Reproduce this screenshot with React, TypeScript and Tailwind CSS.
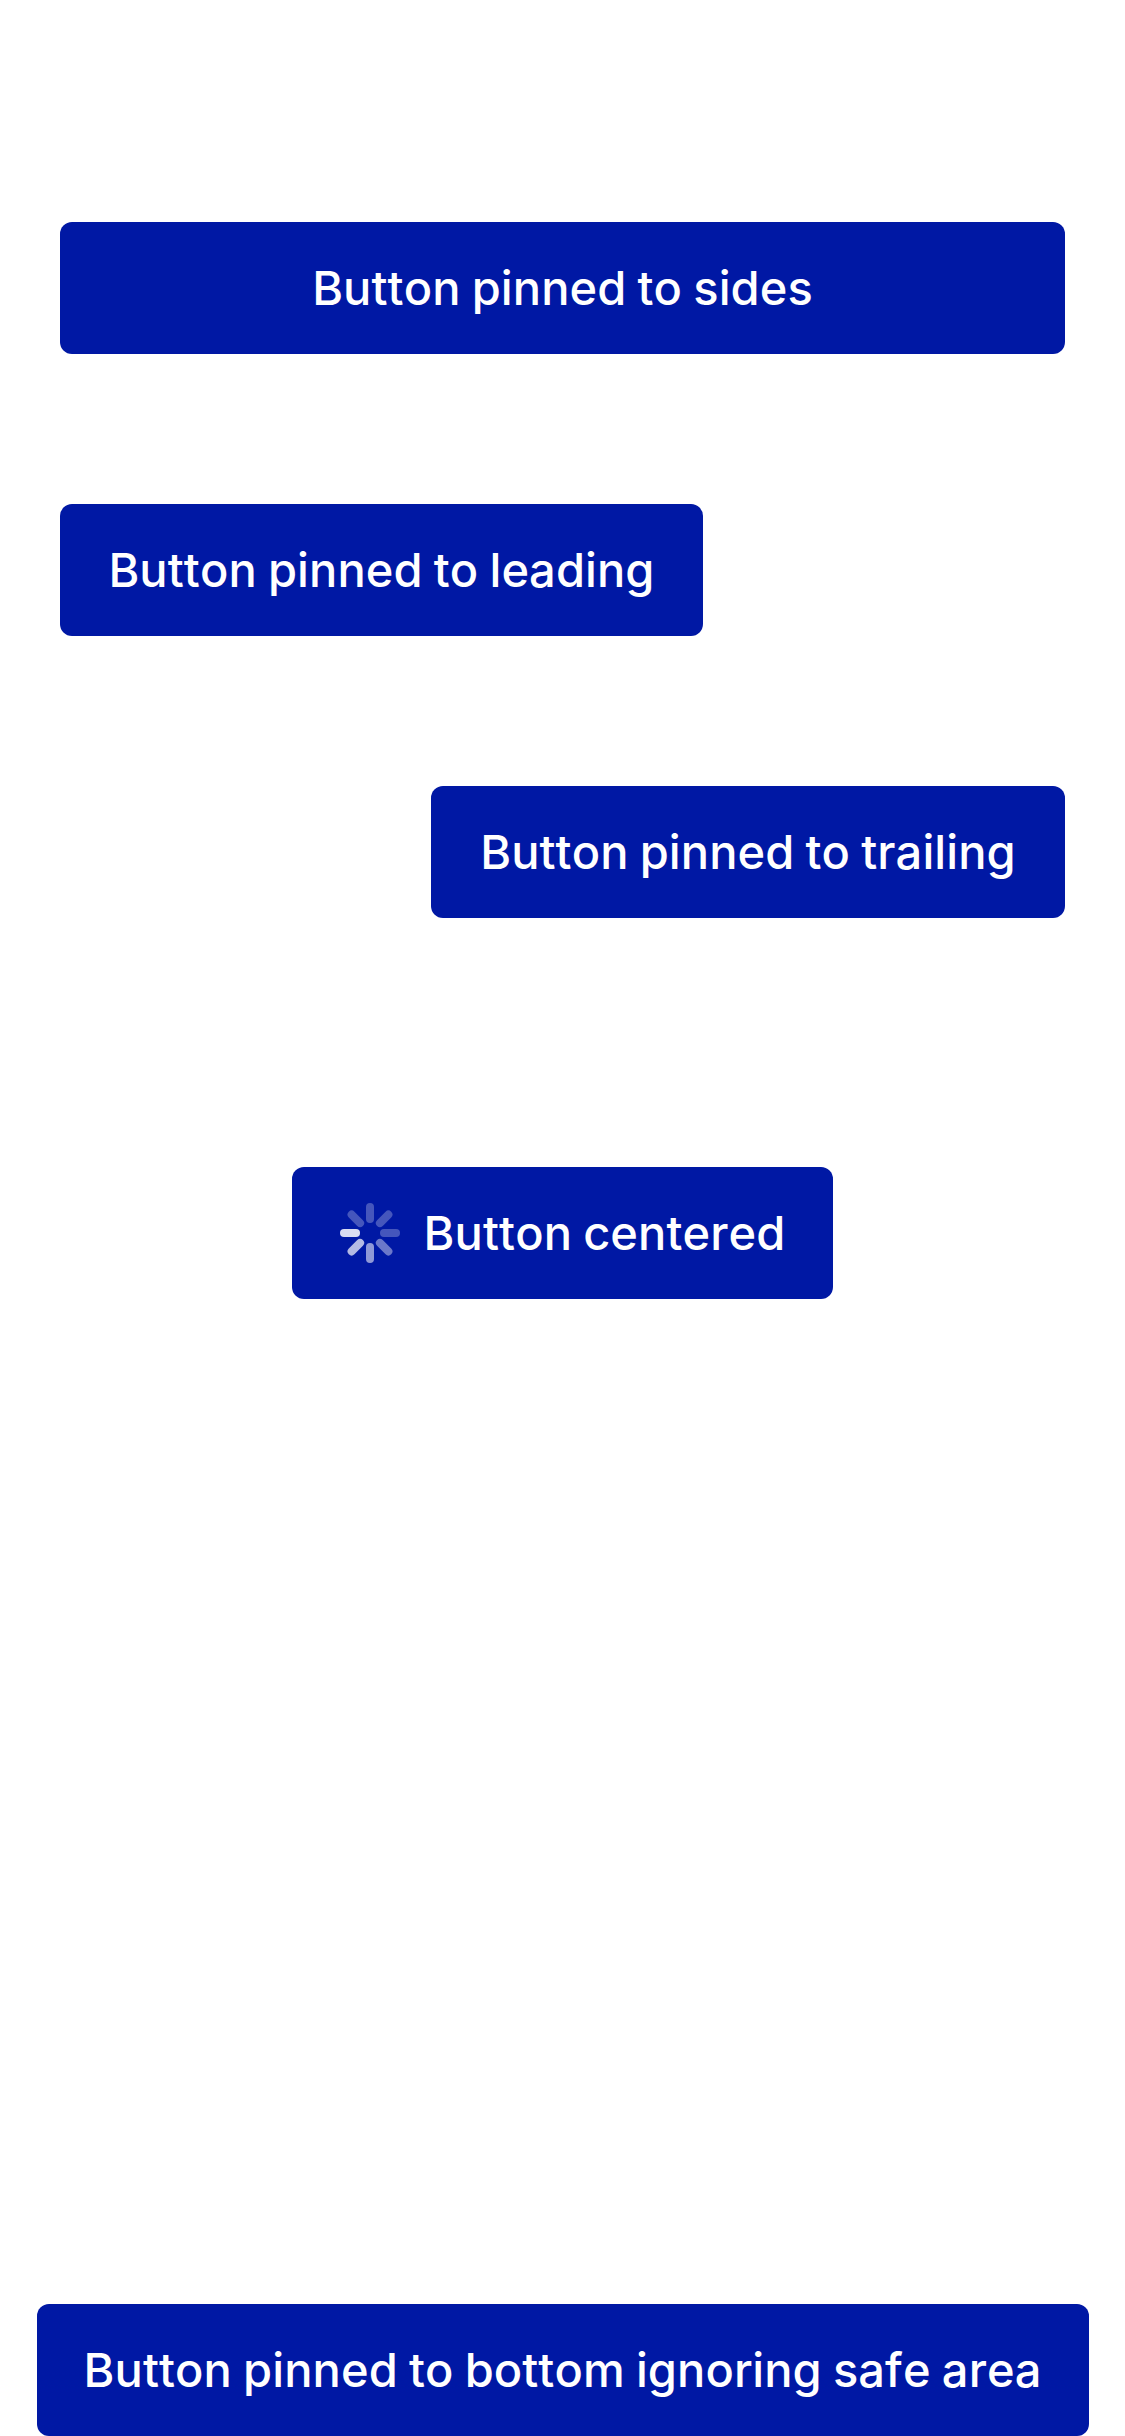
const base = "flex h-[132px] items-center justify-center rounded-xl bg-[#0018a4] font-['Inter',sans-serif] text-[47px] font-medium whitespace-nowrap text-white tracking-[0.1px] [font-kerning:none] [font-variant-ligatures:none] [word-spacing:-1.5px]";

const petals = [
  { angle: 0, opacity: 0.27 },
  { angle: 45, opacity: 0.27 },
  { angle: 90, opacity: 0.27 },
  { angle: 135, opacity: 0.42 },
  { angle: 180, opacity: 0.56 },
  { angle: 225, opacity: 0.7 },
  { angle: 270, opacity: 0.85 },
  { angle: 315, opacity: 0.27 },
];

function Spinner() {
  return (
    <svg className="mr-6 size-[60px] shrink-0" viewBox="0 0 60 60" fill="white">
      {petals.map((p) => (
        <rect key={p.angle} x="26" y="0" width="8" height="20" rx="4" opacity={p.opacity} transform={`rotate(${p.angle} 30 30)`} />
      ))}
    </svg>
  );
}

export default function App() {
  return (
    <main className="flex h-[2436px] w-[1125px] flex-col bg-white pt-[222px]">
      <button className={`${base} mx-[60px]`}>Button pinned to sides</button>
      <button className={`${base} mt-[150px] ml-[60px] w-[643px] self-start`}>Button pinned to leading</button>
      <button className={`${base} mt-[150px] mr-[60px] w-[634px] self-end`}>Button pinned to trailing</button>
      <button className={`${base} mt-[249px] w-[541px] self-center`}>
        <Spinner />
        Button centered
      </button>
      <button className={`${base} mt-auto w-[1052px] self-center`}>
        Button pinned to bottom ignoring safe area
      </button>
    </main>
  );
}
